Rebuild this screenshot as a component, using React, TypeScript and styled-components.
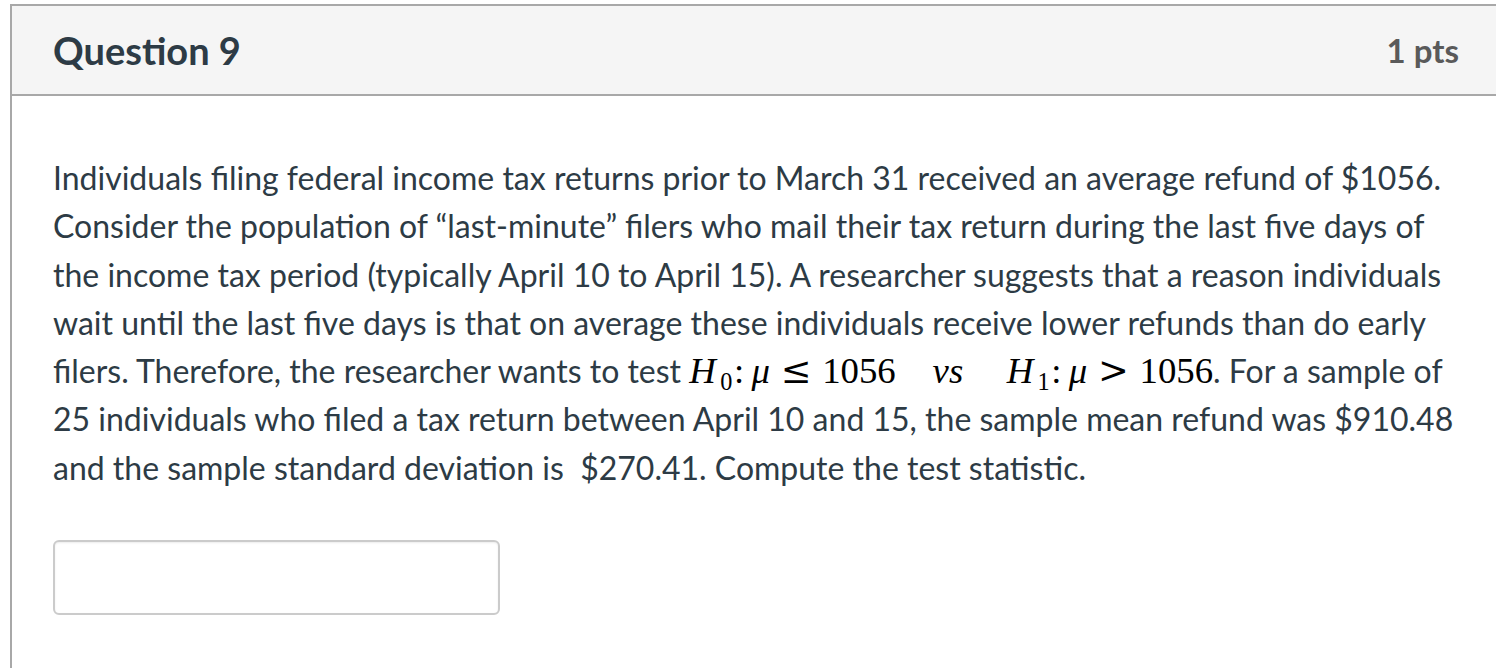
import styled, { createGlobalStyle } from 'styled-components';

const GlobalStyle = createGlobalStyle`
  html, body {
    margin: 0;
    padding: 0;
    background: #ffffff;
    overflow: hidden;
  }

  body {
    font-family: Lato, 'Open Sans', sans-serif;
    color: #2d3b45;
  }
`;

const SQuestion = styled.section`
  margin: 4px -6px 0 10px;
  border: 2px solid #a8a8a8;
  background: #ffffff;
`;

const SHeader = styled.header`
  display: flex;
  align-items: center;
  justify-content: space-between;
  height: 88px;
  padding: 0 41px;
  border-bottom: 2px solid #a8a8a8;
  background: #f5f5f5;
`;

const STitle = styled.h2`
  margin: 0;
  font-size: 38px;
  font-weight: 700;
  color: #2d3b45;
`;

const SPoints = styled.span`
  font-size: 33px;
  font-weight: 700;
  color: #5a5a5a;
`;

const SBody = styled.div`
  padding: 58px 41px 60px;
`;

const SText = styled.p`
  margin: 0;
  font-size: 32px;
  line-height: 48.3px;
  color: #2d3b45;
`;

const SMath = styled.span`
  font-family: 'Liberation Serif', 'DejaVu Serif', serif;
  font-size: 1.15em;
  line-height: 0;
  color: #000000;
  white-space: nowrap;
`;

const SVar = styled.i<{ $gap?: number }>`
  font-style: italic;
  margin-right: ${({ $gap = 0 }) => $gap}em;
`;

const SSub = styled.span`
  font-size: 0.66em;
  vertical-align: -0.28em;
  line-height: 0;
`;

const SColon = styled.span`
  margin-left: 0.04em;
  margin-right: 0.2em;
`;

const SRel = styled.span`
  font-family: 'DejaVu Serif', 'Liberation Serif', serif;
  font-weight: 300;
  margin: 0 0.29em;
`;

const SQuad = styled.i`
  font-style: italic;
  margin: 0 1.18em 0 1em;
`;

const SAnswer = styled.input`
  display: block;
  box-sizing: border-box;
  width: 447px;
  height: 75px;
  margin-top: 48px;
  border: 2px solid #cbcbcb;
  border-radius: 6px;
  box-shadow: inset 0 1px 2px rgba(0, 0, 0, 0.08);
  background: #ffffff;
  outline: none;
`;

const Hypothesis = ({ index, op }: { index: number; op: string }) => (
  <>
    <SVar $gap={0.12}>H</SVar>
    <SSub>{index}</SSub>
    <SColon>:</SColon>
    <SVar>μ</SVar>
    <SRel>{op}</SRel>
    1056
  </>
);

const App = () => {
  return (
    <>
      <GlobalStyle />
      <SQuestion>
        <SHeader>
          <STitle>Question 9</STitle>
          <SPoints>1 pts</SPoints>
        </SHeader>
        <SBody>
          <SText>
            Individuals filing federal income tax returns prior to March 31
            received an average refund of $1056. Consider the population of
            “last-minute” filers who mail their tax return during the last five
            days of the income tax period (typically April 10 to April 15). A
            researcher suggests that a reason individuals wait until the last
            five days is that on average these individuals receive lower refunds
            than do early filers. Therefore, the researcher wants to test{' '}
            <SMath>
              <Hypothesis index={0} op="≤" />
              <SQuad>vs</SQuad>
              <Hypothesis index={1} op=">" />
            </SMath>
            . For a sample of 25 individuals who filed a tax return between
            April 10 and 15, the sample mean refund was $910.48 and the sample
            standard deviation is&nbsp; $270.41. Compute the test statistic.
          </SText>
          <SAnswer type="text" aria-label="Answer" />
        </SBody>
      </SQuestion>
    </>
  );
};

export default App;
